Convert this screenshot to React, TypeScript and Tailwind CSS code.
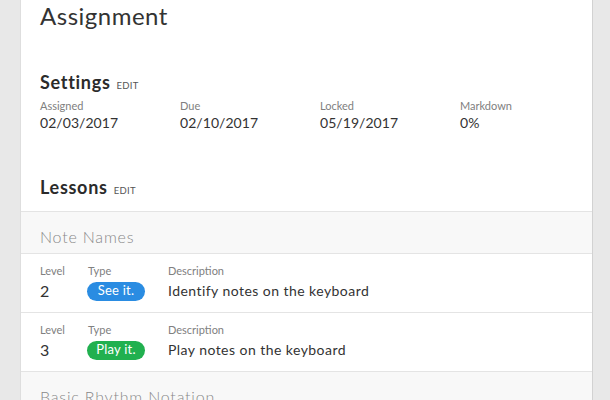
import React from "react";

const font = { fontFamily: "Lato, 'Noto Sans', sans-serif" };

function Field({ label, value }: { label: string; value: string }) {
  return (
    <div className="w-[140px] shrink-0">
      <div className="text-[11px] leading-[14px] text-[#808080]">{label}</div>
      <div className="mt-[1px] text-[14px] leading-[18px] font-normal tracking-[0.05px] text-[#333]">{value}</div>
    </div>
  );
}

function Heading({ title, className }: { title: string; className: string }) {
  return (
    <div className={"flex items-baseline " + className}>
      <span className="text-[18px] leading-[24px] font-bold tracking-[0.7px] text-[#2b2b2b]">{title}</span>
      <span className="ml-[6px] text-[9.5px] uppercase tracking-[0.3px] text-[#555]">Edit</span>
    </div>
  );
}

function LessonRow({ level, badge, badgeClass, desc }: { level: string; badge: string; badgeClass: string; desc: string }) {
  return (
    <div className="flex border-b border-[#e4e4e4] px-[19px] pt-[10px] pb-[11px]">
      <div className="w-[48px] shrink-0">
        <div className="text-[11px] leading-[14px] text-[#808080]">Level</div>
        <div className="mt-[3px] flex h-[20px] items-center text-[16px] leading-[20px] text-[#333]">{level}</div>
      </div>
      <div className="w-[80px] shrink-0">
        <div className="text-[11px] leading-[14px] text-[#808080]">Type</div>
        <div className="mt-[3px] flex h-[20px] items-center">
          <span className={"-ml-[1px] flex h-[19px] w-[58px] items-center justify-center rounded-full text-[13px] tracking-[0.2px] text-white " + badgeClass}>
            {badge}
          </span>
        </div>
      </div>
      <div className="flex-1">
        <div className="text-[11px] leading-[14px] text-[#808080]">Description</div>
        <div className="mt-[3px] flex h-[20px] items-center text-[14px] leading-[20px] tracking-[0.45px] text-[#333]">{desc}</div>
      </div>
    </div>
  );
}

export default function App() {
  return (
    <div className="h-[400px] w-[610px] overflow-hidden bg-[#e8e8e8]" style={font}>
      <div className="ml-[20px] h-[400px] w-[573px] border-x border-l-[#dedede] border-r-[#d2d2d2] bg-white">
        <div className="px-[19px] pt-[1px]">
          <div className="text-[24px] leading-[30px] tracking-[0.5px] text-[#333]">Assignment</div>
          <Heading title="Settings" className="mt-[39px]" />
          <div className="mt-[5px] flex">
            <Field label="Assigned" value="02/03/2017" />
            <Field label="Due" value="02/10/2017" />
            <Field label="Locked" value="05/19/2017" />
            <Field label="Markdown" value="0%" />
          </div>
          <Heading title="Lessons" className="mt-[43px] pb-[12px]" />
        </div>
        <div className="border-y border-[#e4e4e4] bg-[#f8f8f8] px-[19px] pt-[13px] pb-[4px]">
          <div className="text-[16px] leading-[24px] font-light tracking-[0.8px] text-[#888]">Note Names</div>
        </div>
        <LessonRow level="2" badge="See it." badgeClass="bg-[#2a8ce2]" desc="Identify notes on the keyboard" />
        <LessonRow level="3" badge="Play it." badgeClass="bg-[#21b04f]" desc="Play notes on the keyboard" />
        <div className="bg-[#f8f8f8] px-[19px] pt-[13px] pb-[4px]">
          <div className="text-[16px] leading-[24px] font-light tracking-[0.8px] text-[#888]">Basic Rhythm Notation</div>
        </div>
      </div>
    </div>
  );
}
